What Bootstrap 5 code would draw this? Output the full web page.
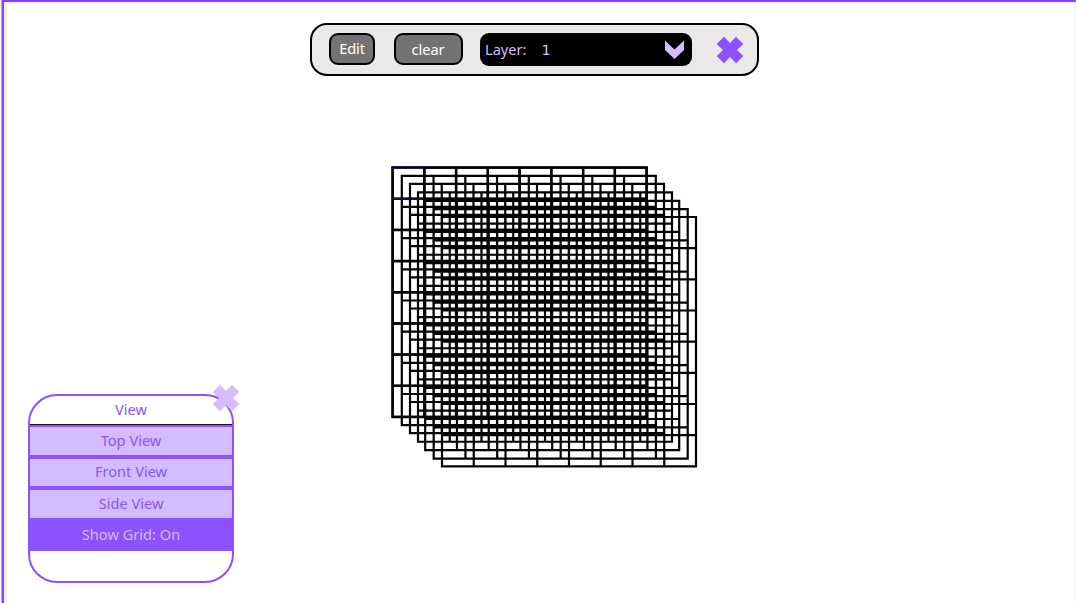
<!DOCTYPE html>
<html lang="en">
<head>
<meta charset="utf-8">
<meta name="viewport" content="width=device-width, initial-scale=1">
<title>Layer editor</title>
<link rel="stylesheet" href="https://cdn.jsdelivr.net/npm/bootstrap@5.3.0/dist/css/bootstrap.min.css">
<style>
body{font-family:"Noto Sans",sans-serif;font-size:14.6px;line-height:20px;background:#fff;--vio:#8c52ff;--lil:#d3bcff}
.stage{height:603px;border-top:2px solid #8b3dff;border-left:2px solid #8b3dff;margin-left:2px;box-shadow:-1px 0 #c9a6ff,inset 2px 2px #f3f3f7,inset 3px 0 #ebecf0,inset -1px 0 #ececf0}
.toolbar{left:310px;top:23px;width:449px;height:53px;border:2px solid #000;border-radius:17px;background:#ebe9e7;padding:0 0 1px 17px}
.tool{height:32px;padding:0;border:2px solid #000;border-radius:9px;background:#737373;color:#fff;font-size:14.6px;line-height:20px}
.tool:hover{background:#666;color:#fff}
.edit{width:46px;padding-bottom:2px;letter-spacing:-.1px}
.clear{width:69px;margin-left:18.5px}
.layer-pick{width:212px;height:33px;margin-left:17.5px;padding:0 7px 0 5px;border:0;border-radius:9px;background:#000;color:var(--lil);font-size:14.6px;line-height:20px}
.num{font-family:"DejaVu Sans",sans-serif;font-size:14.5px;margin-left:15px;padding-top:1px}
.shut{margin-left:23.5px;margin-top:1px}
.view-panel{left:28px;top:394.4px;width:206px;height:188.6px;border:2px solid var(--vio);border-radius:29px}
.view-title{height:29px;border-bottom:1px solid #15101f;color:var(--vio);padding-top:3px}
.view-row{width:206px;margin-left:-2px;padding:0 0 2px;border:2px solid var(--vio);border-radius:0;background:var(--lil);color:var(--vio);font-size:14.6px;line-height:20px;height:31.4px}
.view-row.on{background:var(--vio);color:var(--lil)}
.view-shut{left:182.4px;top:-12px}
.wire{left:0;top:0}
</style>
<script src="https://cdn.jsdelivr.net/npm/bootstrap@5.3.0/dist/js/bootstrap.bundle.min.js"></script>
</head>
<body class="overflow-hidden position-relative">
<main class="stage"></main>
<svg class="wire position-absolute" width="1076" height="603" fill="none" stroke="#000" stroke-width="2.2" id="wire" role="img" aria-label="Stacked grid"></svg>
<header class="toolbar position-absolute d-flex align-items-center">
<button class="btn tool edit">Edit</button>
<button class="btn tool clear">clear</button>
<button class="btn layer-pick d-flex align-items-center"><span>Layer:</span><span class="num">1</span>
<svg class="ms-auto" width="21" height="19" viewBox="0 0 21 19"><path d="M1 .5 10.5 9.5 20 .5V10L10.5 19 1 10Z" fill="#d3bcff"/></svg></button>
<svg class="shut" width="28" height="28" viewBox="0 0 28 28"><path d="M8 .7 14 7 20 .7 27.3 8 21 14 27.3 20 20 27.3 14 21 8 27.3.7 20 7 14 .7 8Z" fill="#8c52ff"/></svg>
</header>
<aside class="view-panel position-absolute text-center">
<div class="view-title">View</div>
<button class="btn view-row d-block">Top View</button>
<button class="btn view-row d-block">Front View</button>
<button class="btn view-row d-block">Side View</button>
<button class="btn view-row on d-block">Show Grid: On</button>
<svg class="view-shut position-absolute" width="28" height="28" viewBox="0 0 28 28"><path d="M8 .7 14 7 20 .7 27.3 8 21 14 27.3 20 20 27.3 14 21 8 27.3.7 20 7 14 .7 8Z" fill="#d3bcff"/></svg>
</aside>
<script>
const xs=[392.6,401.8,410,418,425.2,433.7,442], ys=[167.6,175.8,183.8,192.4,200.8,209.2,217];
const cw=31.75, ch=31.17;
let d='', front='';
xs.forEach((x,k)=>{
  const y=ys[k];
  let s='';
  for(let i=0;i<=8;i++){
    s+=`M${x+i*cw} ${y-1}V${y+8*ch+1}M${x-1} ${y+i*ch}H${x+8*cw+1}`;
  }
  if(k===0) front=s;
  d+=s;
});
document.getElementById('wire').innerHTML=`<path d="${d}"/><path d="${front}" stroke-width="2.5"/><path d="M392 168.2H424M392 199H424" stroke="#5a2fc0" stroke-opacity=".6" stroke-width=".8"/>`;
</script>
</body>
</html>
